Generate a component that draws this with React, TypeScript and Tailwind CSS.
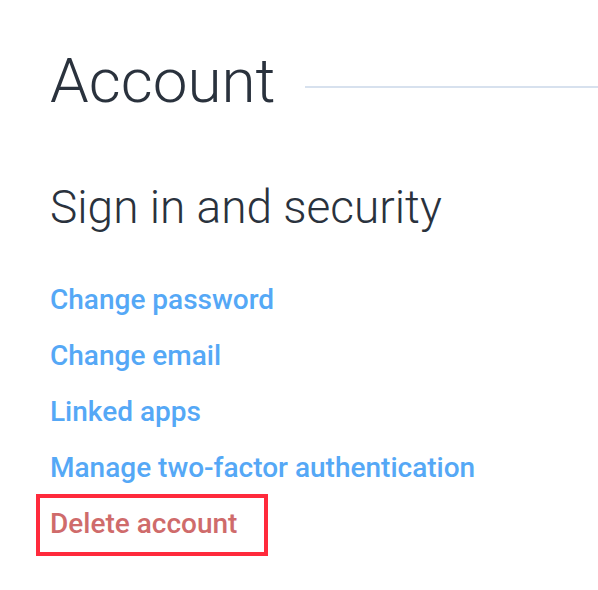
const LINKS = [
  "Change password",
  "Change email",
  "Linked apps",
  "Manage two-factor authentication",
];

export default function App() {
  return (
    <div className="w-[598px] h-[590px] overflow-hidden bg-white font-['Roboto',sans-serif]">
      {/* Page title */}
      <div className="flex items-center pl-[50px] pt-[50px]">
        <h1 className="text-[62px] font-light leading-none text-[#2a323d]">Account</h1>
        <div className="ml-[29px] mt-[12px] h-[2px] flex-1 bg-[#d7e1ee]" />
      </div>

      {/* Section */}
      <section className="pl-[50px] pt-[72px]">
        <h2 className="text-[46px] font-light leading-none text-[#2a323d]">Sign in and security</h2>

        <ul className="mt-[42px]">
          {LINKS.map((label) => (
            <li key={label} className="h-[56px] text-[28px] font-medium leading-[56px] text-[#55a8f6]">
              <a href="#">{label}</a>
            </li>
          ))}
          <li className="relative h-[56px] text-[28px] font-medium leading-[56px] text-[#cf6b6b]">
            <a href="#">Delete account</a>
            {/* highlight box */}
            <span className="pointer-events-none absolute left-[-14px] top-[-2px] h-[62px] w-[232px] border-[4px] border-[#ff2a3c]" />
          </li>
        </ul>
      </section>
    </div>
  );
}
